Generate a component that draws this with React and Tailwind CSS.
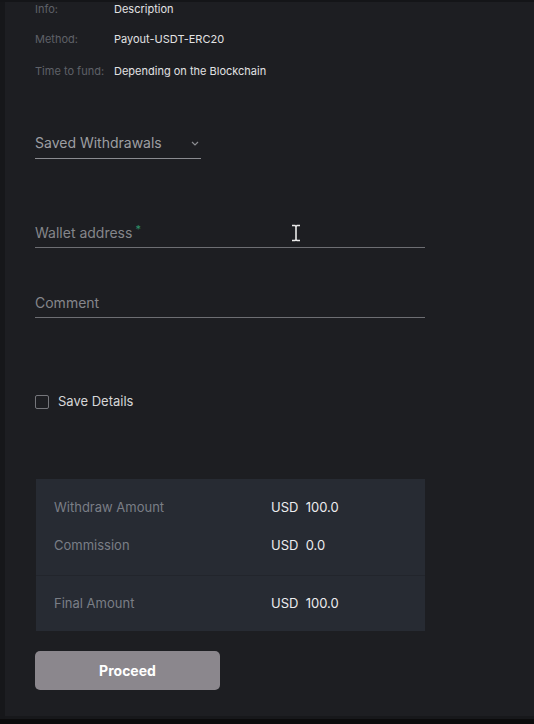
import React from "react";

export default function App() {
  return (
    <div className="w-[534px] h-[724px] bg-[#0b0b0c] flex flex-col overflow-hidden" style={{ fontFamily: "Inter, 'Noto Sans', sans-serif" }}>
      <div className="flex flex-1 border-t-[2px] border-[#141518]">
        <div className="w-[5px] bg-[#16171a]" />
        <div className="flex-1 bg-[#1d1e22] flex flex-col pl-[30px] border-b-[3px] border-[#17181b]">
          <div className="flex flex-col text-[11px] leading-none">
            <div className="flex items-center h-[14px]">
              <span className="w-[79px] text-[#5f6168]">Info:</span>
              <span className="text-[#e2e2e4]">Description</span>
            </div>
            <div className="flex items-center h-[14px] mt-[16px]">
              <span className="w-[79px] text-[#5f6168]">Method:</span>
              <span className="text-[#e2e2e4]">Payout-USDT-ERC20</span>
            </div>
            <div className="flex items-center h-[14px] mt-[18px]">
              <span className="w-[79px] text-[#5f6168]">Time to fund:</span>
              <span className="text-[#e2e2e4]">Depending on the Blockchain</span>
            </div>
          </div>

          <div className="mt-[52px] w-[166px] border-b border-[#8a8b90] flex items-center justify-between h-[29px] pb-[4px]">
            <span className="text-[14px] text-[#9d9ea3]">Saved Withdrawals</span>
            <svg width="10" height="8" viewBox="0 0 10 8" className="mr-[1px] mt-[2px]">
              <path d="M2 3 L5 6 L8 3" stroke="#8b8c91" strokeWidth="1.2" fill="none" />
            </svg>
          </div>

          <div className="mt-[63px] w-[390px] border-b border-[#6d6e73] h-[26px] flex items-center pb-[4px] relative">
            <span className="text-[14px] text-[#85868b]">Wallet address</span>
            <span className="text-[#2e8f6a] text-[11px] ml-[3px] -mt-[6px]">*</span>
            <svg className="absolute left-[256px] top-[2px]" width="10" height="18" viewBox="0 0 10 18">
              <path d="M1 1.5 H4 L5 2.5 L6 1.5 H9 M5 2.5 V15.5 M1 16.5 H4 L5 15.5 L6 16.5 H9" stroke="#e9e9e9" strokeWidth="1.6" fill="none" />
            </svg>
          </div>

          <div className="mt-[44px] w-[390px] border-b border-[#6d6e73] h-[26px] flex items-center pb-[4px]">
            <span className="text-[14px] text-[#85868b]">Comment</span>
          </div>

          <div className="mt-[74px] flex items-center">
            <div className="w-[14px] h-[14px] border-[1.5px] border-[#75767b] rounded-[2px]" />
            <span className="ml-[9px] text-[13px] text-[#d6d6d8]">Save Details</span>
          </div>

          <div className="mt-[67px] ml-[1px] w-[389px] bg-[#272b33] flex flex-col text-[13px]">
            <div className="flex items-center h-[20px] mt-[19px]">
              <span className="w-[235px] pl-[18px] text-[#7a7e86]">Withdraw Amount</span>
              <span className="text-[#ececee]">USD&nbsp;&nbsp;100.0</span>
            </div>
            <div className="flex items-center h-[20px] mt-[18px]">
              <span className="w-[235px] pl-[18px] text-[#7a7e86]">Commission</span>
              <span className="text-[#ececee]">USD&nbsp; 0.0</span>
            </div>
            <div className="mt-[19px] border-t border-[#22252c]" />
            <div className="flex items-center h-[20px] mt-[18px] mb-[17px]">
              <span className="w-[235px] pl-[18px] text-[#7a7e86]">Final Amount</span>
              <span className="text-[#ececee]">USD&nbsp; 100.0</span>
            </div>
          </div>

          <button className="mt-[20px] w-[185px] h-[39px] rounded-[5px] bg-[#8b878d] text-white text-[14px] font-bold">
            Proceed
          </button>
        </div>
      </div>
      <div className="h-[5px] bg-[#0b0b0c]" />
    </div>
  );
}
